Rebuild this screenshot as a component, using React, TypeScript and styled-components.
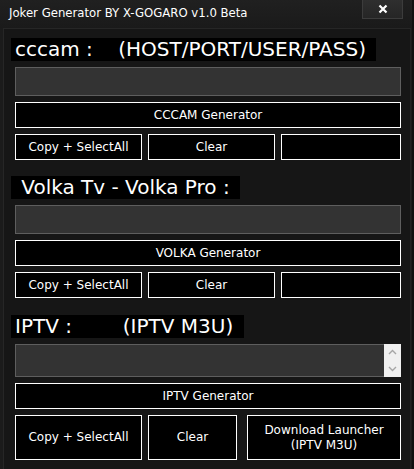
import styled, { createGlobalStyle } from "styled-components";

const GlobalStyle = createGlobalStyle`
  html, body {
    margin: 0;
    padding: 0;
    background: #101010;
  }
  body {
    font-family: "DejaVu Sans", sans-serif;
    color: #fff;
  }
`;

const Window = styled.div`
  box-sizing: border-box;
  width: 412px;
  height: 469px;
  display: flex;
  flex-direction: column;
  background: #1b1b1b;
`;

const TitleBar = styled.div`
  height: 28px;
  flex-shrink: 0;
  display: flex;
  align-items: flex-start;
  justify-content: space-between;
  padding-left: 9px;
  background: linear-gradient(#202020, #1a1a1a);
`;

const Title = styled.span`
  margin-top: 5px;
  font-family: "DejaVu Sans Condensed", "DejaVu Sans", sans-serif;
  font-size: 13px;
  line-height: 16px;
  color: #fff;
`;

const CloseButton = styled.button`
  box-sizing: border-box;
  width: 41px;
  height: 19px;
  margin-right: 9px;
  padding: 0;
  display: flex;
  align-items: center;
  justify-content: center;
  background: linear-gradient(#2f2f2f, #262626);
  border: 1px solid #3c3c3c;
  border-top: none;
`;

const Panel = styled.div`
  box-sizing: border-box;
  flex: 1;
  margin: 0 1px 0 3px;
  padding: 9px 9px 0 11px;
  display: flex;
  flex-direction: column;
  gap: 16px;
  background: #161616;
  border-top: 1px solid #262626;
  border-left: 1px solid #262626;
  border-right: 1px solid #222;
`;

const Section = styled.section<{ $top?: number }>`
  display: flex;
  flex-direction: column;
  gap: 6px;
  margin-top: ${({ $top }) => $top ?? 0}px;
`;

const Heading = styled.h2`
  align-self: flex-start;
  margin: 0 0 0 -4px;
  padding: 0 4px;
  height: 23px;
  line-height: 23px;
  font-family: "DejaVu Sans", sans-serif;
  font-size: 20px;
  font-weight: normal;
  white-space: pre;
  background: #000;
  color: #fff;
`;

const Field = styled.div<{ $h: number }>`
  box-sizing: border-box;
  height: ${({ $h }) => $h}px;
  display: flex;
  background: #333;
  border: 1px solid #5e5e5e;
`;

const FieldArea = styled.div`
  flex: 1;
`;

const ScrollBar = styled.div`
  width: 17px;
  margin: -1px -1px -1px 0;
  background: #f0f0f0;
  display: flex;
  flex-direction: column;
  justify-content: space-between;
  align-items: center;
  padding: 5px 0 5px;
`;

const Button = styled.button<{ $h?: number; $inset?: number }>`
  box-sizing: border-box;
  height: ${({ $h }) => $h ?? 26}px;
  margin-left: ${({ $inset }) => $inset ?? 0}px;
  padding: 0;
  background: #000;
  border: 1px solid #fff;
  color: #fff;
  font-family: "DejaVu Sans", sans-serif;
  font-size: 12px;
  line-height: 15px;
  text-align: center;
`;

const Row = styled.div<{ $cols: string }>`
  display: grid;
  grid-template-columns: ${({ $cols }) => $cols};
  gap: 6px;
`;

const Chevron = ({ up }: { up?: boolean }) => (
  <svg width="9" height="6" viewBox="0 0 9 6">
    <path
      d={up ? "M1 5 L4.5 1.5 L8 5" : "M1 1 L4.5 4.5 L8 1"}
      fill="none"
      stroke="#a6a6a6"
      strokeWidth="1.4"
    />
  </svg>
);

export default function App() {
  return (
    <>
      <GlobalStyle />
      <Window>
        <TitleBar>
          <Title>Joker Generator BY X-GOGARO v1.0 Beta</Title>
          <CloseButton>
            <svg width="10" height="10" viewBox="0 0 10 10">
              <path d="M1.5 1.5 L8.5 8.5 M8.5 1.5 L1.5 8.5" stroke="#fff" strokeWidth="2.2" />
            </svg>
          </CloseButton>
        </TitleBar>
        <Panel>
          <Section>
            <Heading>{"cccam :    (HOST/PORT/USER/PASS) "}</Heading>
            <Field $h={29} />
            <Button>CCCAM Generator</Button>
            <Row $cols="127px 127px 1fr">
              <Button>Copy + SelectAll</Button>
              <Button>Clear</Button>
              <Button />
            </Row>
          </Section>
          <Section>
            <Heading>{" Volka Tv - Volka Pro : "}</Heading>
            <Field $h={29} />
            <Button>VOLKA Generator</Button>
            <Row $cols="127px 127px 1fr">
              <Button>Copy + SelectAll</Button>
              <Button>Clear</Button>
              <Button />
            </Row>
          </Section>
          <Section $top={1}>
            <Heading>{"IPTV :        (IPTV M3U) "}</Heading>
            <Field $h={33}>
              <FieldArea />
              <ScrollBar>
                <Chevron up />
                <Chevron />
              </ScrollBar>
            </Field>
            <Button>IPTV Generator</Button>
            <Row $cols="127px 89px 1fr">
              <Button $h={45}>Copy + SelectAll</Button>
              <Button $h={45}>Clear</Button>
              <Button $h={45} $inset={4}>
                Download Launcher
                <br />
                (IPTV M3U)
              </Button>
            </Row>
          </Section>
        </Panel>
      </Window>
    </>
  );
}
